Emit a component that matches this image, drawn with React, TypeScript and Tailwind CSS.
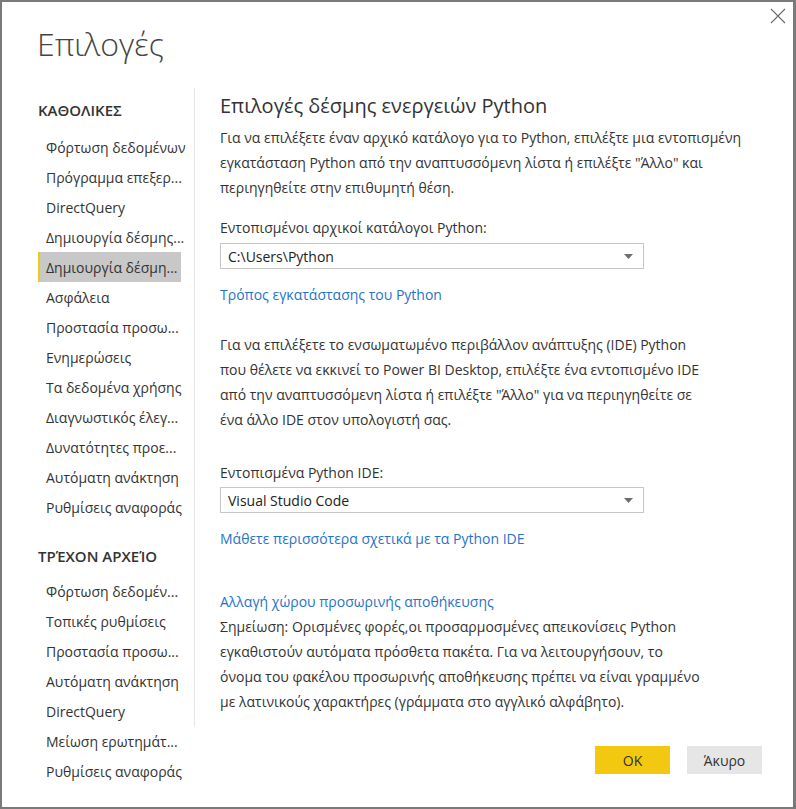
import React from "react";

const font = { fontFamily: '"Open Sans", "Noto Sans", "DejaVu Sans", sans-serif' };

const general = [
  "Φόρτωση δεδομένων",
  "Πρόγραμμα επεξερ...",
  "DirectQuery",
  "Δημιουργία δέσμης...",
  "Δημιουργία δέσμη...",
  "Ασφάλεια",
  "Προστασία προσω...",
  "Ενημερώσεις",
  "Τα δεδομένα χρήσης",
  "Διαγνωστικός έλεγ...",
  "Δυνατότητες προε...",
  "Αυτόματη ανάκτηση",
  "Ρυθμίσεις αναφοράς",
];

const current = [
  "Φόρτωση δεδομέν...",
  "Τοπικές ρυθμίσεις",
  "Προστασία προσω...",
  "Αυτόματη ανάκτηση",
  "DirectQuery",
  "Μείωση ερωτημάτ...",
  "Ρυθμίσεις αναφοράς",
];

function NavItem({ label, active }: { label: string; active?: boolean }) {
  return (
    <div
      className={
        "h-[30px] w-[143px] flex items-center whitespace-nowrap text-[14px] text-[#333] " +
        (active ? "bg-[#c8c8c8] border-l-2 border-[#f2c811] pl-[6px]" : "pl-[8px]")
      }
    >
      {label}
    </div>
  );
}

function Select({ value }: { value: string }) {
  return (
    <div className="h-[26px] w-[424px] border border-[#c6c6c6] flex items-center justify-between pl-[7px] pr-[10px] text-[14px] text-[#222]">
      <span>{value}</span>
      <svg width="9" height="5" viewBox="0 0 9 5">
        <path d="M0 0 L9 0 L4.5 5 Z" fill="#6e6e6e" />
      </svg>
    </div>
  );
}

export default function App() {
  return (
    <div
      style={font}
      className="w-[796px] h-[809px] bg-white border-l-2 border-t-2 border-b-2 border-r-[3px] border-[#7a7a7a] flex flex-col overflow-hidden"
    >
      <div className="h-[86px] flex justify-between">
        <div className="pl-[35px] pt-[22px] text-[32px] font-light leading-[40px] text-[#444]">Επιλογές</div>
        <div className="pt-[6px] pr-[7px]">
          <svg width="16" height="16" viewBox="0 0 16 16">
            <path d="M1 1 L15 15 M15 1 L1 15" stroke="#6a6a6a" strokeWidth="1.1" />
          </svg>
        </div>
      </div>
      <div className="flex flex-1">
        <div className="w-[192px] pl-[36px]">
          <div className="pt-[12px] mb-[12px] leading-[20px] text-[15px] font-semibold text-[#333]">ΚΑΘΟΛΙΚΕΣ</div>
          {general.map((g, i) => (
            <NavItem key={i} label={g} active={i === 4} />
          ))}
          <div className="pt-[24px] mb-[10px] leading-[20px] text-[15px] font-semibold text-[#333]">ΤΡΈΧΟΝ ΑΡΧΕΊΟ</div>
          {current.map((g, i) => (
            <NavItem key={i} label={g} />
          ))}
        </div>
        <div className="w-px h-[639px] bg-[#e6e6e6]" />
        <div className="pl-[25px] flex-1 pr-[31px] text-[14px] text-[#333] leading-[25px]">
          <div className="pt-[4px] text-[20px] leading-[28px] text-[#333]">Επιλογές δέσμης ενεργειών Python</div>
          <div className="mt-[5px] whitespace-nowrap">
            <div>Για να επιλέξετε έναν αρχικό κατάλογο για το Python, επιλέξτε μια εντοπισμένη</div>
            <div>εγκατάσταση Python από την αναπτυσσόμενη λίστα ή επιλέξτε "Άλλο" και</div>
            <div>περιηγηθείτε στην επιθυμητή θέση.</div>
          </div>
          <div className="mt-[15px]">Εντοπισμένοι αρχικοί κατάλογοι Python:</div>
          <div className="mt-[3px]">
            <Select value="C:\Users\Python" />
          </div>
          <div className="mt-[13px] text-[#1f74c9]">Τρόπος εγκατάστασης του Python</div>
          <div className="mt-[25px] whitespace-nowrap">
            <div>Για να επιλέξετε το ενσωματωμένο περιβάλλον ανάπτυξης (IDE) Python</div>
            <div>που θέλετε να εκκινεί το Power BI Desktop, επιλέξτε ένα εντοπισμένο IDE</div>
            <div>από την αναπτυσσόμενη λίστα ή επιλέξτε "Άλλο" για να περιηγηθείτε σε</div>
            <div>ένα άλλο IDE στον υπολογιστή σας.</div>
          </div>
          <div className="mt-[28px]">Εντοπισμένα Python IDE:</div>
          <div className="mt-[2px]">
            <Select value="Visual Studio Code" />
          </div>
          <div className="mt-[13px] text-[#1f74c9]">Μάθετε περισσότερα σχετικά με τα Python IDE</div>
          <div className="mt-[38px] text-[#1f74c9]">Αλλαγή χώρου προσωρινής αποθήκευσης</div>
          <div className="whitespace-nowrap">
            <div>Σημείωση: Ορισμένες φορές,οι προσαρμοσμένες απεικονίσεις Python</div>
            <div>εγκαθιστούν αυτόματα πρόσθετα πακέτα. Για να λειτουργήσουν, το</div>
            <div>όνομα του φακέλου προσωρινής αποθήκευσης πρέπει να είναι γραμμένο</div>
            <div>με λατινικούς χαρακτήρες (γράμματα στο αγγλικό αλφάβητο).</div>
          </div>
          <div className="mt-[32px] flex justify-end gap-[17px]">
            <div className="w-[75px] h-[28px] bg-[#f2c811] flex items-center justify-center text-[14px] text-[#333]">OK</div>
            <div className="w-[75px] h-[28px] bg-[#e6e6e6] flex items-center justify-center text-[14px] text-[#333]">Άκυρο</div>
          </div>
        </div>
      </div>
    </div>
  );
}
